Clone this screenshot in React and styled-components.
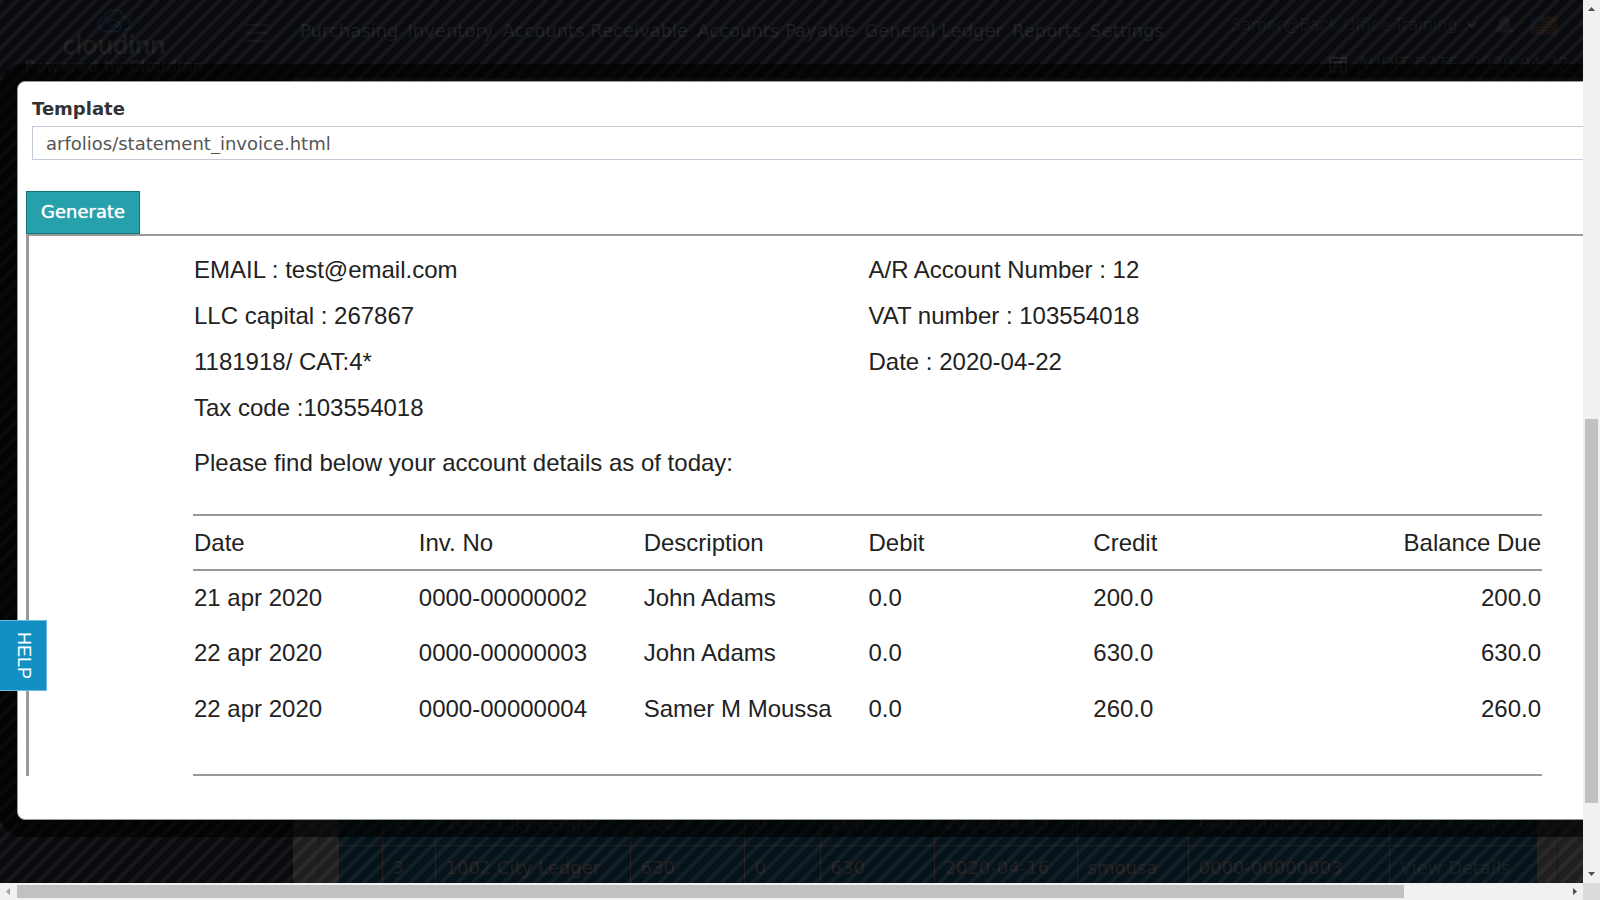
import styled, { createGlobalStyle } from "styled-components"

const navItems = ["Purchasing", "Inventory", "Accounts Receivable", "Accounts Payable", "General Ledger", "Reports", "Settings"];

const ledgerColumns = [43, 53, 195, 114, 76, 114, 143, 111, 201, 148];
const ledgerRows = [
    ["2", "1002 City Ledger", "200", "0", "200", "2020-04-15", "smousa", "0000-00000002", "View Details"],
    ["3", "1002 City Ledger", "630", "0", "630", "2020-04-16", "smousa", "0000-00000003", "View Details"],
];

const leftInfo = ["EMAIL : test@email.com", "LLC capital : 267867", "1181918/ CAT:4*", "Tax code :103554018"];
const rightInfo = ["A/R Account Number : 12", "VAT number : 103554018", "Date : 2020-04-22"];

const invoiceHead = ["Date", "Inv. No", "Description", "Debit", "Credit", "Balance Due"];
const invoices = [
    ["21 apr 2020", "0000-00000002", "John Adams", "0.0", "200.0", "200.0"],
    ["22 apr 2020", "0000-00000003", "John Adams", "0.0", "630.0", "630.0"],
    ["22 apr 2020", "0000-00000004", "Samer M Moussa", "0.0", "260.0", "260.0"],
];

export default function App() {
    return (
        <Window>
            <GlobalStyle />
            <Viewport>
                <Header>
                    <Brand>
                        <CloudLogo />
                        <BrandName>cloudinn</BrandName>
                        <Powered>Powered by Cloudinn</Powered>
                    </Brand>
                    <MenuButton aria-label="Menu"><i /><i /><i /></MenuButton>
                    <Nav>
                        {navItems.map((item) => <NavLink href="#" key={item}>{item}</NavLink>)}
                    </Nav>
                    <Account>
                        <UserRow>
                            <UserButton>
                                Samer@Back Office Training
                                <svg width="10" height="8" viewBox="0 0 10 8" fill="none" stroke="currentColor" strokeWidth="2"><path d="M1 2l4 4 4-4" /></svg>
                            </UserButton>
                            <Bell />
                            <Flag />
                        </UserRow>
                        <AuditDate>
                            <CalendarIcon />
                            AUDIT DATE: 2020-04-22
                        </AuditDate>
                    </Account>
                </Header>
                <Body>
                    <Sidebar />
                    <Content>
                        <Panel>
                            <LedgerTable>
                                <colgroup>
                                    {ledgerColumns.map((w, i) => <col key={i} width={w} />)}
                                </colgroup>
                                <tbody>
                                    {ledgerRows.map((row) => (
                                        <tr key={row[0]}>
                                            <td />
                                            {row.map((cell, i) => <td key={i}>{cell}</td>)}
                                        </tr>
                                    ))}
                                </tbody>
                            </LedgerTable>
                        </Panel>
                    </Content>
                </Body>
                <Stripes />
                <Modal role="dialog" aria-label="Statement">
                    <Field>
                        <Label htmlFor="template">Template</Label>
                        <TemplateInput id="template" defaultValue="arfolios/statement_invoice.html" />
                    </Field>
                    <GenerateButton>Generate</GenerateButton>
                    <Preview>
                        <InfoColumns>
                            <div>{leftInfo.map((line) => <InfoLine key={line}>{line}</InfoLine>)}</div>
                            <div>{rightInfo.map((line) => <InfoLine key={line}>{line}</InfoLine>)}</div>
                        </InfoColumns>
                        <Intro>Please find below your account details as of today:</Intro>
                        <InvoiceTable>
                            <thead>
                                <tr>{invoiceHead.map((head) => <th key={head}>{head}</th>)}</tr>
                            </thead>
                            <tbody>
                                {invoices.map((row) => (
                                    <tr key={row[1]}>{row.map((cell, i) => <td key={i}>{cell}</td>)}</tr>
                                ))}
                            </tbody>
                        </InvoiceTable>
                    </Preview>
                </Modal>
                <HelpButton>HELP</HelpButton>
            </Viewport>
            <ScrollBar $vertical>
                <ScrollArrow aria-label="Scroll up"><Arrow points="5,11 12,11 8.5,7" /></ScrollArrow>
                <ScrollSpace $size={402} />
                <ScrollThumb $size={384} $vertical />
                <ScrollSpace $size={63} />
                <ScrollArrow aria-label="Scroll down"><Arrow points="5,6 12,6 8.5,10" /></ScrollArrow>
            </ScrollBar>
            <ScrollBar>
                <ScrollArrow aria-label="Scroll left"><Arrow points="10,5 10,12 6,8.5" fill="#a3a3a3" /></ScrollArrow>
                <ScrollThumb $size={1387} />
                <ScrollSpace $size={162} />
                <ScrollArrow aria-label="Scroll right"><Arrow points="7,5 7,12 11,8.5" /></ScrollArrow>
            </ScrollBar>
            <ScrollCorner />
        </Window>
    );
}

function Arrow({ points, fill = "#505050" }) {
    return <svg width="17" height="17" viewBox="0 0 17 17"><polygon points={points} fill={fill} /></svg>
}

function CloudLogo() {
    return (
        <svg width="36" height="26" viewBox="0 0 38 28" fill="none" stroke="#0a1a24" strokeWidth="2" strokeLinecap="round">
            <path d="M9 24C4 24 2 20 2 17c0-4 3-7 7-7 1-5 5-8 10-8s9 3 10 8c4 0 7 3 7 7 0 3-2 6-5 7" />
            <path d="M12 17c2-4 5-5 8-4s5 3 6 6-1 6-4 6H9M16 20c1-2 5-2 7 1" />
        </svg>
    )
}

function Bell() {
    return (
        <svg width="22" height="22" viewBox="0 0 22 22" fill="#131517">
            <path d="M11 1c1 0 1.500 1 1.500 2 3 .5 4.500 3 4.500 6 0 4 1 6 4 8v1H1v-1c3-2 4-4 4-8 0-3 1.500-5.500 4.500-6C9.500 2 10 1 11 1zM8 19h6c0 3-6 3-6 0z" />
        </svg>
    )
}

function Flag() {
    return (
        <svg width="26" height="18" viewBox="0 0 26 18">
            <rect width="26" height="18" fill="#191615" />
            <path d="M0 1h26M0 4h26M0 7h26M0 10h26M0 13h26M0 16h26" stroke="#170f0e" strokeWidth="2" />
            <rect width="10" height="9" fill="#0a0e18" />
        </svg>
    )
}

function CalendarIcon() {
    return (
        <svg width="18" height="18" viewBox="0 0 18 18" fill="none" stroke="currentColor" strokeWidth="2">
            <path d="M1 3h16v14H1zM1 7h16M5 0v4M13 0v4M6 8v9M12 8v9M2 12h14" />
        </svg>
    )
}


const GlobalStyle = createGlobalStyle`
    *, *:before, *:after {box-sizing: border-box;}
    body {margin: 0; overflow: hidden; font-family: "DejaVu Sans", Verdana, sans-serif; font-size: 18px;}
    button, input {font: inherit; margin: 0;}
    button {padding: 0; border: 0; background: none; color: inherit;}
    svg {display: block; flex-shrink: 0;}
`
const Window = styled.div`
    display: grid;
    grid-template: minmax(0, 1fr) 17px / minmax(0, 1fr) 17px;
    height: 100vh;
`
const Viewport = styled.div`
    position: relative;
    display: flex;
    flex-direction: column;
    overflow: hidden;
    background: #0a0b0e;
`
const Header = styled.header`
    display: flex;
    align-items: flex-start;
    color: #1c1e20;
    white-space: nowrap;
`
const Brand = styled.div`
    display: flex;
    flex-direction: column;
    align-items: center;
    width: 228px;
    padding-top: 8px;
    color: #181a1b;
`
const BrandName = styled.div`
    font-family: Lato, sans-serif;
    font-size: 27px;
    font-weight: bold;
    line-height: 20px;
`
const Powered = styled.div`
    margin-top: 4px;
    font-size: 15px;
    font-weight: bold;
    line-height: 18px;
`
const MenuButton = styled.button`
    display: flex;
    flex-direction: column;
    gap: 6px;
    width: 24px;
    margin: 24px 31px 0 17px;
    i {height: 2px; background: #121416;}
`
const Nav = styled.nav`
    display: flex;
    flex: 1;
    gap: 9px;
    padding-top: 20px;
`
const NavLink = styled.a`
    line-height: 22px;
    color: inherit;
    text-decoration: none;
`
const Account = styled.div`
    display: flex;
    flex-direction: column;
    align-items: flex-end;
    padding: 12px 14px 0 0;
    font-weight: 200;
    color: #1d1f20;
`
const UserRow = styled.div`
    display: flex;
    align-items: center;
    gap: 16px;
    padding-right: 12px;
`
const UserButton = styled.button`
    display: flex;
    align-items: center;
    gap: 10px;
    font-size: 16px;
    line-height: 26px;
`
const AuditDate = styled.div`
    display: flex;
    align-items: center;
    gap: 10px;
    margin-top: 12px;
    font-size: 17px;
    line-height: 28px;
`
const Body = styled.div`
    display: flex;
    flex: 1;
    align-items: stretch;
`
const Sidebar = styled.aside`
    width: 294px;
`
const Content = styled.main`
    display: flex;
    flex: 1;
    padding: 0 25px;
    background: #201f1f;
`
const Panel = styled.div`
    display: flex;
    flex: 1;
    align-items: flex-end;
    margin-bottom: -7px;
    padding: 0 20px;
    border: solid #141618;
    border-width: 0 1px;
`
const LedgerTable = styled.table`
    width: 100%;
    table-layout: fixed;
    border-collapse: collapse;
    background: #06131a;
    color: #241f1f;
    td {height: 45px; padding: 0 10px; border: 1px solid #241d1b; border-width: 1px 1px 0 0; white-space: nowrap;}
    td:last-child {border-right: 0; color: #152025;}
`
const Stripes = styled.div`
    position: absolute;
    inset: 0;
    background: repeating-linear-gradient(135deg, rgba(255, 255, 255, 0.05) 0 3px, transparent 4px 10px, rgba(255, 255, 255, 0.05) 11px);
`
const Modal = styled.section`
    position: absolute;
    top: 81px; left: 17px; right: -10px;
    padding: 0 0 43px 8px;
    border: 1px solid #999;
    border-radius: 8px;
    background: #fff;
    box-shadow: 0 0 0 17px rgba(0, 0, 0, 0.6);
`
const Field = styled.div`
    display: flex;
    flex-direction: column;
    padding: 16px 0 0 6px;
`
const Label = styled.label`
    font-weight: bold;
    line-height: 22px;
    color: #333;
`
const TemplateInput = styled.input`
    width: 100%; height: 34px;
    margin-top: 6px;
    padding: 0 13px;
    border: 1px solid #c2cad8;
    background: #fff;
    color: #555;
`
const GenerateButton = styled.button`
    display: block;
    height: 43px;
    margin-top: 31px;
    padding: 0 14px 2px;
    border: 1px solid #14727b;
    background: #26a0ab;
    color: #fff;
    text-shadow: 0 0 1px #fff;
`
const Preview = styled.div`
    padding: 11px 50px 0 164px;
    border: solid #9a9a9a;
    border-width: 2px 0 0 3px;
    font-family: "Liberation Sans", Arial, sans-serif;
    font-size: 24px;
    color: #222;
`
const InfoColumns = styled.div`
    display: grid;
    grid-template-columns: 1fr 1fr;
`
const InfoLine = styled.div`
    padding-left: 1px;
    line-height: 46px;
`
const Intro = styled.p`
    margin: 7px 0 26px;
    padding-left: 1px;
    line-height: 50px;
`
const InvoiceTable = styled.table`
    width: 100%;
    table-layout: fixed;
    border-collapse: collapse;
    border: solid #999;
    border-width: 2px 0;
    th, td {height: 55px; padding: 0 1px; font-weight: normal; text-align: left; white-space: nowrap;}
    th {border-bottom: 2px solid #999;}
    tbody tr:last-child td {height: 95px; padding-bottom: 36px;}
    th:last-child, td:last-child {text-align: right;}
`
const HelpButton = styled.button`
    position: absolute;
    top: 620px; left: 0;
    width: 47px; height: 71px;
    border: 1px solid #6dbbdc;
    border-left: 0;
    background: #1290c3;
    color: #fff;
    font-family: "Liberation Sans", Arial, sans-serif;
    writing-mode: vertical-rl;
`
const ScrollBar = styled.div`
    display: flex;
    flex-direction: ${({$vertical}) => $vertical ? "column" : "row"};
    background: #f1f1f1;
`
const ScrollArrow = styled.button`
    flex: none;
    width: 17px; height: 17px;
`
const ScrollSpace = styled.div`
    flex: ${({$size}) => $size} 1 0;
`
const ScrollThumb = styled.div`
    flex: ${({$size}) => $size} 1 0;
    margin: ${({$vertical}) => $vertical ? "0 2px" : "2px 0"};
    background: #c1c1c1;
`
const ScrollCorner = styled.div`
    background: #dcdcdc;
`
